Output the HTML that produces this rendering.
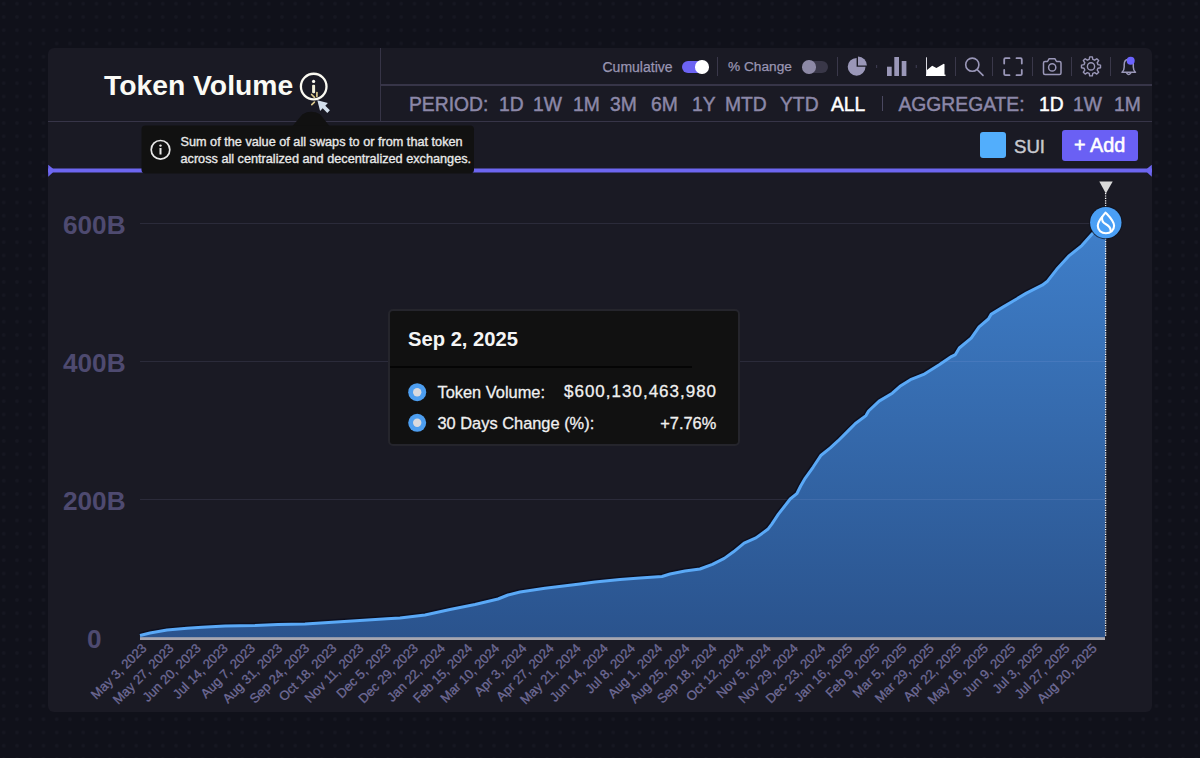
<!DOCTYPE html>
<html><head><meta charset="utf-8">
<style>
html,body{margin:0;padding:0;}
body{width:1200px;height:758px;overflow:hidden;position:relative;background-color:#10111a;
background-image:radial-gradient(circle at 50% 50%, #161721 0, #161721 1.2px, rgba(22,23,33,0) 2.4px);
background-size:13.25px 13.25px;background-position:-2.9px -2.9px;
font-family:"Liberation Sans",sans-serif;}
.abs{position:absolute;}
#card{left:48px;top:48px;width:1104px;height:664px;background:#1a1a24;border-radius:6px;}
.hl{position:absolute;height:1px;background:#373548;}
.vl{position:absolute;width:1px;background:#363446;}
.t{position:absolute;white-space:nowrap;line-height:1;}
.per{font-size:19.3px;color:#8c88a8;top:95px;-webkit-text-stroke-width:0.45px;}
.dv{position:absolute;width:1px;background:#3a384a;top:57px;height:19px;}
</style></head><body>
<div id="card" class="abs"></div>
<!-- header lines -->
<div class="hl" style="left:380px;top:84.2px;height:1.5px;width:772px;"></div>
<div class="hl" style="left:48px;top:120.9px;height:1.5px;width:1104px;"></div>
<div class="vl" style="left:380px;top:48px;height:74px;"></div>

<!-- title -->
<div class="t" style="left:104px;top:71.4px;font-size:28.3px;font-weight:bold;color:#fafaf5;">Token Volume</div>

<!-- toolbar -->
<div class="t" style="left:602.5px;top:60px;font-size:14px;color:#9995b2;-webkit-text-stroke:0.25px #9995b2;">Cumulative</div>
<div class="abs" style="left:682px;top:60.5px;width:26px;height:12.5px;border-radius:7px;background:#6c63f2;"></div>
<div class="abs" style="left:695px;top:60px;width:13.5px;height:13.5px;border-radius:50%;background:#fff;"></div>
<div class="dv" style="left:717px;"></div>
<div class="t" style="left:728px;top:60px;font-size:13.7px;color:#9995b2;-webkit-text-stroke:0.25px #9995b2;">% Change</div>
<div class="abs" style="left:802.5px;top:60.5px;width:25px;height:12.5px;border-radius:7px;background:#393748;"></div>
<div class="abs" style="left:802px;top:60px;width:13.5px;height:13.5px;border-radius:50%;background:#8d89a6;"></div>
<div class="dv" style="left:837px;"></div>
<div class="dv" style="left:955px;"></div>
<div class="dv" style="left:992px;"></div>
<div class="dv" style="left:1032px;"></div>
<div class="dv" style="left:1071px;"></div>
<div class="dv" style="left:1110px;"></div>
<svg class="abs" style="left:0;top:0" width="1200" height="130" viewBox="0 0 1200 130">
  <!-- pie -->
  <path d="M856.6,66.8 L856.6,57.9 A8.9,8.9 0 1 0 865.5,66.8 Z" fill="#9a97b8"/>
  <path d="M858,65.5 L858,56.6 A8.9,8.9 0 0 1 866.9,65.5 Z" fill="#9a97b8"/>
  <!-- bars -->
  <g fill="#9a97b8">
    <rect x="887" y="66.7" width="4.7" height="9.3"/>
    <rect x="894.3" y="57" width="4.7" height="19"/>
    <rect x="901.7" y="61" width="4.7" height="15"/>
  </g>
  <!-- small ticks between chart types -->
  <rect x="876.3" y="65" width="0.8" height="3" fill="#4a4860"/>
  <rect x="915.8" y="65" width="0.8" height="3" fill="#4a4860"/>
  <!-- area icon -->
  <rect x="926" y="57.3" width="1" height="18.5" fill="#d8d8e0"/>
  <g fill="#ffffff">
    <rect x="926" y="74.6" width="19.5" height="1.4"/>
    <path d="M927,75 L927,70 L932.2,65.8 L936.4,67.9 L943.8,63.8 L944.5,64.2 L944.5,75 Z"/>
  </g>
  <!-- search -->
  <g fill="none" stroke="#9a97b8" stroke-width="1.6" stroke-linecap="round">
    <circle cx="972.3" cy="64.7" r="6.6"/>
    <line x1="977.2" y1="69.6" x2="983" y2="75.4"/>
  </g>
  <!-- fullscreen -->
  <g fill="none" stroke="#9a97b8" stroke-width="1.8" stroke-linecap="round" stroke-linejoin="round">
    <path d="M1004.2,63.5 L1004.2,59.5 Q1004.2,58.2 1005.5,58.2 L1009.5,58.2"/>
    <path d="M1016.5,58.2 L1020.5,58.2 Q1021.8,58.2 1021.8,59.5 L1021.8,63.5"/>
    <path d="M1021.8,70 L1021.8,74 Q1021.8,75.2 1020.5,75.2 L1016.5,75.2"/>
    <path d="M1009.5,75.2 L1005.5,75.2 Q1004.2,75.2 1004.2,74 L1004.2,70"/>
  </g>
  <!-- camera -->
  <g fill="none" stroke="#9a97b8" stroke-width="1.5" stroke-linejoin="round">
    <path d="M1045,61.5 L1047.5,61.5 L1049,58.8 L1055,58.8 L1056.5,61.5 L1059.5,61.5 Q1061,61.5 1061,63 L1061,73 Q1061,74.5 1059.5,74.5 L1045,74.5 Q1043.5,74.5 1043.5,73 L1043.5,63 Q1043.5,61.5 1045,61.5 Z"/>
    <circle cx="1052.2" cy="67.4" r="3.6"/>
  </g>
  <!-- gear -->
  <g fill="none" stroke="#9a97b8" stroke-width="1.4" stroke-linejoin="round">
    <path d="M1097.97,64.61 L1100.51,65.08 L1100.51,67.72 L1097.97,68.19 L1097.20,70.07 L1098.66,72.19 L1096.79,74.06 L1094.67,72.60 L1092.79,73.37 L1092.32,75.91 L1089.68,75.91 L1089.21,73.37 L1087.33,72.60 L1085.21,74.06 L1083.34,72.19 L1084.80,70.07 L1084.03,68.19 L1081.49,67.72 L1081.49,65.08 L1084.03,64.61 L1084.80,62.73 L1083.34,60.61 L1085.21,58.74 L1087.33,60.20 L1089.21,59.43 L1089.68,56.89 L1092.32,56.89 L1092.79,59.43 L1094.67,60.20 L1096.79,58.74 L1098.66,60.61 L1097.20,62.73 Z"/>
    <circle cx="1091" cy="66.4" r="3.6"/>
  </g>
  <!-- bell -->
  <g fill="none" stroke="#9a97b8" stroke-width="1.5" stroke-linejoin="round" stroke-linecap="round">
    <path d="M1122,72.3 L1135.5,72.3 Q1133.3,70.5 1133.3,67 L1133.3,64.5 Q1133.3,59.2 1128.7,59.2 Q1124.2,59.2 1124.2,64.5 L1124.2,67 Q1124.2,70.5 1122,72.3 Z"/>
    <path d="M1126.8,73.2 Q1128.7,75.6 1130.6,73.2"/>
  </g>
  <circle cx="1130.7" cy="60.7" r="4" fill="#6c63ff"/>
</svg>

<!-- period row -->
<div class="t per" style="left:409px;">PERIOD:</div>
<div class="t per" style="left:499px;">1D</div>
<div class="t per" style="left:533px;">1W</div>
<div class="t per" style="left:573px;">1M</div>
<div class="t per" style="left:610px;">3M</div>
<div class="t per" style="left:651px;">6M</div>
<div class="t per" style="left:692px;">1Y</div>
<div class="t per" style="left:725px;">MTD</div>
<div class="t per" style="left:780px;">YTD</div>
<div class="t per" style="left:831px;color:#ffffff;">ALL</div>
<div class="abs" style="left:881.5px;top:96px;width:1px;height:15px;background:#4a4860;"></div>
<div class="t per" style="left:898.5px;">AGGREGATE:</div>
<div class="t per" style="left:1039px;color:#ffffff;">1D</div>
<div class="t per" style="left:1073px;">1W</div>
<div class="t per" style="left:1114px;">1M</div>

<!-- legend -->
<div class="abs" style="left:980px;top:132px;width:26px;height:26px;border-radius:3px;background:#52aefc;"></div>
<div class="t" style="left:1014px;top:137.5px;font-size:18.6px;color:#c9c9cf;-webkit-text-stroke:0.45px #c9c9cf;">SUI</div>
<div class="abs" style="left:1062px;top:130px;width:76px;height:31px;border-radius:3px;background:#6a60f4;"></div>
<div class="t" style="left:1074px;top:136px;font-size:19.8px;color:#ffffff;-webkit-text-stroke:0.55px #ffffff;">+ Add</div>

<!-- slider bar -->
<svg class="abs" style="left:0;top:0" width="1200" height="200" viewBox="0 0 1200 200">
  <rect x="48" y="168.5" width="1104" height="4" fill="#6d66f0"/>
  <path d="M48.2,164.7 L52.8,168.6 L52.8,172.4 L48.2,176.7 Z" fill="#6d66f0"/>
  <path d="M1151.8,164.7 L1147.2,168.6 L1147.2,172.4 L1151.8,176.7 Z" fill="#6d66f0"/>
</svg>

<!-- y labels -->
<div class="t" style="left:0;width:188.6px;text-align:center;top:211.6px;font-size:26.2px;font-weight:bold;color:#4e4a70;">600B</div>
<div class="t" style="left:0;width:188.6px;text-align:center;top:349.6px;font-size:26.2px;font-weight:bold;color:#4e4a70;">400B</div>
<div class="t" style="left:0;width:188.6px;text-align:center;top:487.6px;font-size:26.2px;font-weight:bold;color:#4e4a70;">200B</div>
<div class="t" style="left:0;width:188.6px;text-align:center;top:625.6px;font-size:26.2px;font-weight:bold;color:#4e4a70;">0</div>

<!-- chart svg -->
<svg class="abs" style="left:0;top:0" width="1200" height="758" viewBox="0 0 1200 758">
  <defs>
    <linearGradient id="ag" x1="0" y1="222" x2="0" y2="637" gradientUnits="userSpaceOnUse">
      <stop offset="0" stop-color="#3f7fca"/>
      <stop offset="1" stop-color="#2a538d"/>
    </linearGradient>
  </defs>
  <path fill="none" stroke="#05081a" stroke-opacity="0.6" stroke-width="6" stroke-linejoin="round" d="M140,635.5 L150,633 L167,630.1 L187,628.3 L202,627.2 L225,626 L255,625.6 L278,624.5 L305,623.9 L352,621 L387,618.7 L400,618 L425,615 L450,609.5 L475,604.5 L498,599 L508,595 L520,592 L545,588.3 L580,584 L595,582 L620,579.5 L640,578 L662,576.5 L670,574 L685,571 L700,569 L712.4,564.3 L724.3,558.4 L733.5,551.8 L744.1,543.2 L755.9,537.9 L767.8,529.3 L771.8,524.1 L778.4,514.2 L790.2,499 L796.8,493.7 L800.8,485.8 L805.3,478 L813.2,467 L821.1,455.2 L830.3,447.9 L838.2,440.7 L848.8,430.1 L855.4,423.5 L866,415.6 L868.6,411 L879.1,401.1 L892.3,393.2 L900,386.3 L910.5,379.7 L923.7,374.4 L939.6,364.5 L951.4,356.6 L955.4,354.6 L959.3,348 L971.2,338.1 L979.1,326.9 L988.4,319 L991,314.4 L1002.9,307.1 L1013.2,301 L1026.4,293.1 L1042.2,285.2 L1047.5,281.2 L1056.7,269.3 L1068.6,256.2 L1081.8,245.6 L1092.3,233.7 L1098.9,227.1 L1105.8,222.6"/>
  <path id="area" fill="url(#ag)" d="M140,635.5 L150,633 L167,630.1 L187,628.3 L202,627.2 L225,626 L255,625.6 L278,624.5 L305,623.9 L352,621 L387,618.7 L400,618 L425,615 L450,609.5 L475,604.5 L498,599 L508,595 L520,592 L545,588.3 L580,584 L595,582 L620,579.5 L640,578 L662,576.5 L670,574 L685,571 L700,569 L712.4,564.3 L724.3,558.4 L733.5,551.8 L744.1,543.2 L755.9,537.9 L767.8,529.3 L771.8,524.1 L778.4,514.2 L790.2,499 L796.8,493.7 L800.8,485.8 L805.3,478 L813.2,467 L821.1,455.2 L830.3,447.9 L838.2,440.7 L848.8,430.1 L855.4,423.5 L866,415.6 L868.6,411 L879.1,401.1 L892.3,393.2 L900,386.3 L910.5,379.7 L923.7,374.4 L939.6,364.5 L951.4,356.6 L955.4,354.6 L959.3,348 L971.2,338.1 L979.1,326.9 L988.4,319 L991,314.4 L1002.9,307.1 L1013.2,301 L1026.4,293.1 L1042.2,285.2 L1047.5,281.2 L1056.7,269.3 L1068.6,256.2 L1081.8,245.6 L1092.3,233.7 L1098.9,227.1 L1105.8,222.6 L1105,638 L140,638 Z"/>
  <g stroke="#c8c8ff" stroke-opacity="0.1" stroke-width="1">
    <line x1="140" y1="223.5" x2="1105" y2="223.5"/>
    <line x1="140" y1="361.5" x2="1105" y2="361.5"/>
    <line x1="140" y1="499.5" x2="1105" y2="499.5"/>
  </g>
  <path id="line" fill="none" stroke="#5aa9f7" stroke-width="3" stroke-linejoin="round" d="M140,635.5 L150,633 L167,630.1 L187,628.3 L202,627.2 L225,626 L255,625.6 L278,624.5 L305,623.9 L352,621 L387,618.7 L400,618 L425,615 L450,609.5 L475,604.5 L498,599 L508,595 L520,592 L545,588.3 L580,584 L595,582 L620,579.5 L640,578 L662,576.5 L670,574 L685,571 L700,569 L712.4,564.3 L724.3,558.4 L733.5,551.8 L744.1,543.2 L755.9,537.9 L767.8,529.3 L771.8,524.1 L778.4,514.2 L790.2,499 L796.8,493.7 L800.8,485.8 L805.3,478 L813.2,467 L821.1,455.2 L830.3,447.9 L838.2,440.7 L848.8,430.1 L855.4,423.5 L866,415.6 L868.6,411 L879.1,401.1 L892.3,393.2 L900,386.3 L910.5,379.7 L923.7,374.4 L939.6,364.5 L951.4,356.6 L955.4,354.6 L959.3,348 L971.2,338.1 L979.1,326.9 L988.4,319 L991,314.4 L1002.9,307.1 L1013.2,301 L1026.4,293.1 L1042.2,285.2 L1047.5,281.2 L1056.7,269.3 L1068.6,256.2 L1081.8,245.6 L1092.3,233.7 L1098.9,227.1 L1105.8,222.6"/>
  <rect x="140" y="637.2" width="965" height="2.8" fill="#a6a6b0"/>
  <g font-family="Liberation Sans" font-size="13.1" fill="#6e6a96" stroke="#6e6a96" stroke-width="0.3" text-anchor="end"><text x="147.30" y="649.0" transform="rotate(-45 147.30 649.0)">May 3, 2023</text><text x="174.45" y="649.0" transform="rotate(-45 174.45 649.0)">May 27, 2023</text><text x="201.60" y="649.0" transform="rotate(-45 201.60 649.0)">Jun 20, 2023</text><text x="228.75" y="649.0" transform="rotate(-45 228.75 649.0)">Jul 14, 2023</text><text x="255.90" y="649.0" transform="rotate(-45 255.90 649.0)">Aug 7, 2023</text><text x="283.06" y="649.0" transform="rotate(-45 283.06 649.0)">Aug 31, 2023</text><text x="310.21" y="649.0" transform="rotate(-45 310.21 649.0)">Sep 24, 2023</text><text x="337.36" y="649.0" transform="rotate(-45 337.36 649.0)">Oct 18, 2023</text><text x="364.51" y="649.0" transform="rotate(-45 364.51 649.0)">Nov 11, 2023</text><text x="391.66" y="649.0" transform="rotate(-45 391.66 649.0)">Dec 5, 2023</text><text x="418.81" y="649.0" transform="rotate(-45 418.81 649.0)">Dec 29, 2023</text><text x="445.96" y="649.0" transform="rotate(-45 445.96 649.0)">Jan 22, 2024</text><text x="473.11" y="649.0" transform="rotate(-45 473.11 649.0)">Feb 15, 2024</text><text x="500.27" y="649.0" transform="rotate(-45 500.27 649.0)">Mar 10, 2024</text><text x="527.42" y="649.0" transform="rotate(-45 527.42 649.0)">Apr 3, 2024</text><text x="554.57" y="649.0" transform="rotate(-45 554.57 649.0)">Apr 27, 2024</text><text x="581.72" y="649.0" transform="rotate(-45 581.72 649.0)">May 21, 2024</text><text x="608.87" y="649.0" transform="rotate(-45 608.87 649.0)">Jun 14, 2024</text><text x="636.02" y="649.0" transform="rotate(-45 636.02 649.0)">Jul 8, 2024</text><text x="663.17" y="649.0" transform="rotate(-45 663.17 649.0)">Aug 1, 2024</text><text x="690.32" y="649.0" transform="rotate(-45 690.32 649.0)">Aug 25, 2024</text><text x="717.48" y="649.0" transform="rotate(-45 717.48 649.0)">Sep 18, 2024</text><text x="744.63" y="649.0" transform="rotate(-45 744.63 649.0)">Oct 12, 2024</text><text x="771.78" y="649.0" transform="rotate(-45 771.78 649.0)">Nov 5, 2024</text><text x="798.93" y="649.0" transform="rotate(-45 798.93 649.0)">Nov 29, 2024</text><text x="826.08" y="649.0" transform="rotate(-45 826.08 649.0)">Dec 23, 2024</text><text x="853.23" y="649.0" transform="rotate(-45 853.23 649.0)">Jan 16, 2025</text><text x="880.38" y="649.0" transform="rotate(-45 880.38 649.0)">Feb 9, 2025</text><text x="907.53" y="649.0" transform="rotate(-45 907.53 649.0)">Mar 5, 2025</text><text x="934.69" y="649.0" transform="rotate(-45 934.69 649.0)">Mar 29, 2025</text><text x="961.84" y="649.0" transform="rotate(-45 961.84 649.0)">Apr 22, 2025</text><text x="988.99" y="649.0" transform="rotate(-45 988.99 649.0)">May 16, 2025</text><text x="1016.14" y="649.0" transform="rotate(-45 1016.14 649.0)">Jun 9, 2025</text><text x="1043.29" y="649.0" transform="rotate(-45 1043.29 649.0)">Jul 3, 2025</text><text x="1070.44" y="649.0" transform="rotate(-45 1070.44 649.0)">Jul 27, 2025</text><text x="1097.59" y="649.0" transform="rotate(-45 1097.59 649.0)">Aug 20, 2025</text></g>
  <!-- marker -->
  <line x1="1105.6" y1="193" x2="1105.6" y2="637" stroke="#ffffff" stroke-width="1.3" stroke-dasharray="1.2,1.2"/>
  <path d="M1099.3,181.5 L1112.7,181.5 L1105.9,193.5 Z" fill="#d9d9d9"/>
  <circle cx="1105.8" cy="222.6" r="16.8" fill="#10121e" fill-opacity="0.7"/>
  <circle cx="1105.8" cy="222.6" r="15.7" fill="#4a9ff5"/>
  <g fill="none" stroke="#ffffff" stroke-width="2.1" stroke-linejoin="round" stroke-linecap="round">
    <path d="M1105.6,212.6 C1101.5,217.5 1097.8,221 1097.8,225.8 C1097.8,230.3 1101.3,233.3 1105.9,233.3 C1110.6,233.3 1114.1,230.2 1114.1,225.8 C1114.1,221.2 1110.2,217.5 1105.6,212.6 Z"/>
    <path d="M1102.2,217 C1101.3,220.8 1103.2,222.8 1106,224.3 C1108.8,225.8 1110.6,227.5 1110.6,230.5"/>
  </g>
</svg>

<!-- info icon next to title -->
<svg class="abs" style="left:0;top:0" width="500" height="200" viewBox="0 0 500 200">
  <path d="M292.5,126 L302.5,114.2 Q311.3,109.3 320.1,114.2 L329.5,126 Z" fill="#111111"/>
  <circle cx="313.7" cy="86.55" r="12.8" fill="none" stroke="#fbfaf2" stroke-width="2.3"/>
  <circle cx="313.6" cy="81.4" r="1.65" fill="#fbfaf2"/>
  <rect x="312.1" y="84.7" width="3" height="8.5" rx="1" fill="#f2efd8"/>
  <g stroke="#dcc98c" stroke-width="1.7" stroke-linecap="round">
    <line x1="311.6" y1="94.5" x2="314.5" y2="97.3"/>
    <line x1="316.9" y1="92.6" x2="316.9" y2="96.3"/>
    <line x1="311.8" y1="104.6" x2="314.4" y2="102.2"/>
  </g>
  <path d="M317.3,100.3 L327.9,103.1 L325.3,105.7 L329.9,110.3 L327.3,112.9 L322.7,108.3 L320.1,110.9 Z" fill="#d3dfec"/>
  <!-- tooltip 1 -->
  <rect x="141.5" y="125.5" width="332.5" height="48" rx="4" fill="#111111"/>
  <circle cx="160.5" cy="149.8" r="9.3" fill="none" stroke="#e8e8e8" stroke-width="1.7"/>
  <circle cx="160.5" cy="145.6" r="1.2" fill="#e8e8e8"/>
  <rect x="159.5" y="148" width="2" height="6.5" fill="#e8e8e8"/>
</svg>
<div class="t" style="left:180.5px;top:136.3px;font-size:12.7px;color:#e8e8e8;-webkit-text-stroke:0.35px #e8e8e8;">Sum of the value of all swaps to or from that token</div>
<div class="t" style="left:180.5px;top:152.8px;font-size:12.7px;color:#e8e8e8;-webkit-text-stroke:0.35px #e8e8e8;">across all centralized and decentralized exchanges.</div>

<!-- data tooltip -->
<div class="abs" style="left:387.7px;top:309px;width:352px;height:136.6px;background:#111111;border:2px solid #25252c;border-radius:5px;box-sizing:border-box;"></div>
<div class="abs" style="left:390px;top:366px;width:302px;height:2px;background:#050505;"></div>
<div class="t" style="left:408px;top:328.6px;font-size:20.2px;font-weight:bold;color:#f5f5f5;">Sep 2, 2025</div>
<svg class="abs" style="left:0;top:0" width="760" height="460" viewBox="0 0 760 460">
  <circle cx="417.2" cy="392.2" r="9" fill="#4d9ef0"/>
  <circle cx="417.2" cy="392.2" r="4.2" fill="#d9d9de"/>
  <circle cx="417.2" cy="422.8" r="9" fill="#4d9ef0"/>
  <circle cx="417.2" cy="422.8" r="4.2" fill="#d9d9de"/>
</svg>
<div class="t" style="left:437.5px;top:383.8px;font-size:16.4px;color:#f0f0f0;-webkit-text-stroke:0.3px #f0f0f0;">Token Volume:</div>
<div class="t" style="left:437.5px;top:414.6px;font-size:16.4px;color:#f0f0f0;-webkit-text-stroke:0.3px #f0f0f0;">30 Days Change (%):</div>
<div class="t" style="left:564px;top:383.3px;font-size:17px;color:#f0f0f0;-webkit-text-stroke:0.3px #f0f0f0;letter-spacing:1.0px;">$600,130,463,980</div>
<div class="t" style="right:483.7px;top:414.6px;font-size:16.4px;color:#f0f0f0;-webkit-text-stroke:0.3px #f0f0f0;">+7.76%</div>
</body></html>
